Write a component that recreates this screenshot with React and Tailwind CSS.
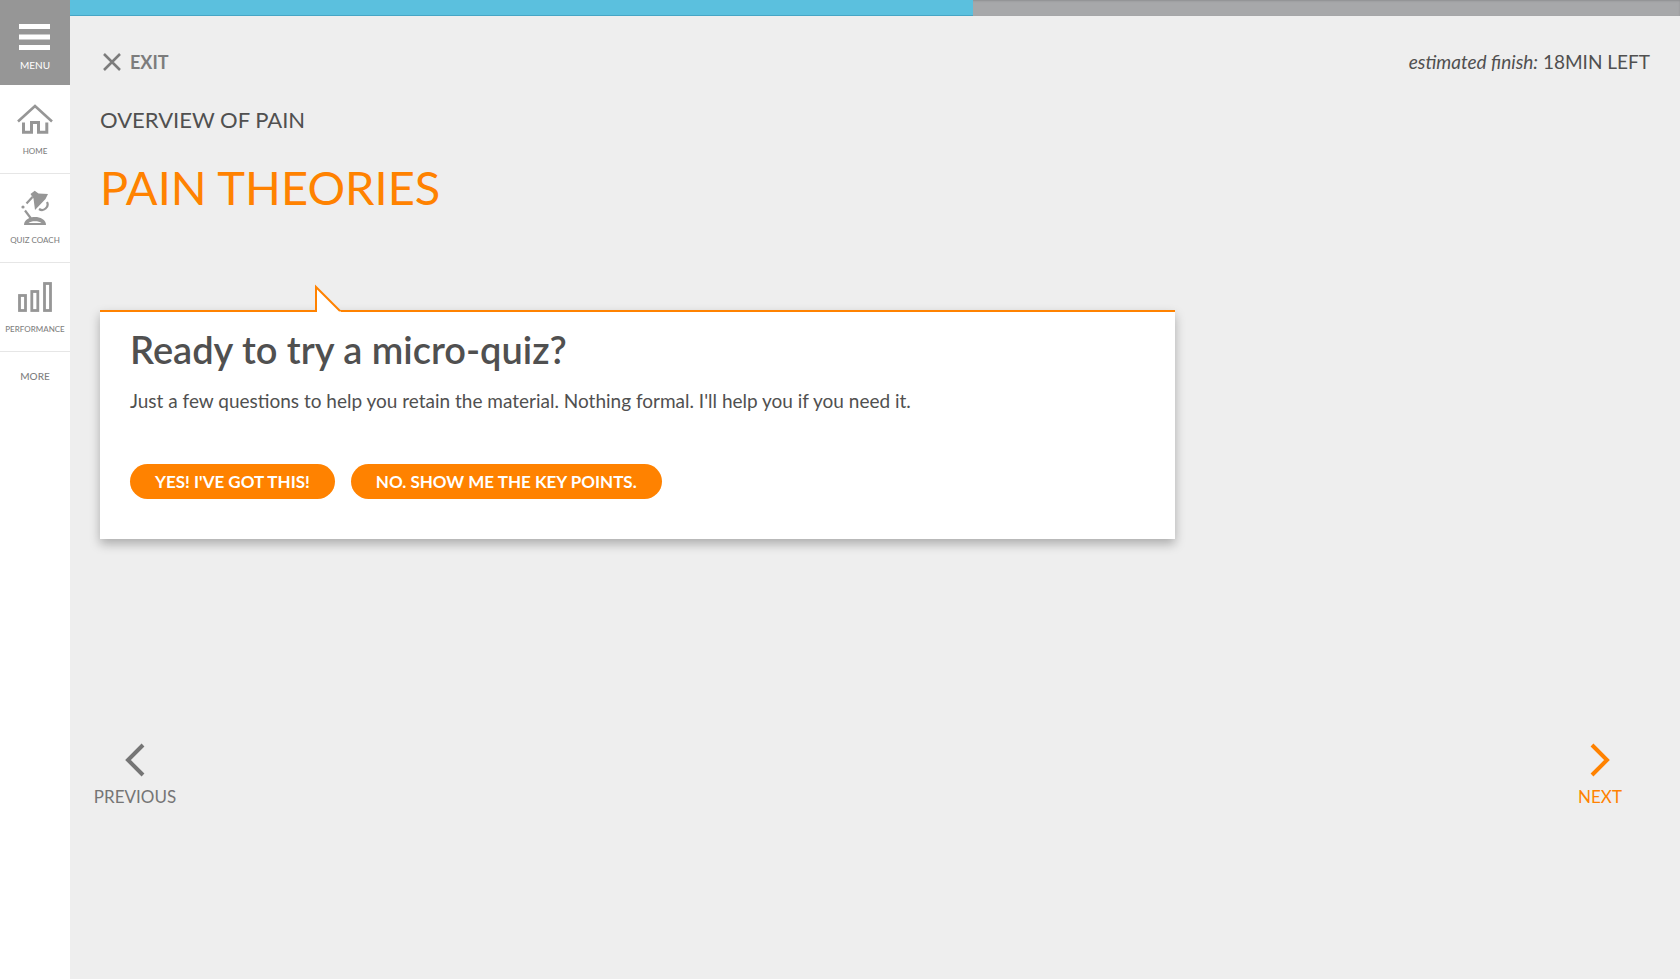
import React from "react";

function HomeIcon() {
  return (
    <svg width="36" height="30" viewBox="0 0 36 30" fill="none" stroke="#969696">
      <path d="M1 17.5 L18 2 L35 17.5" strokeWidth="2.6" />
      <path d="M6.5 18.5 V28.2 H14.5 V18.5 H21.5 V28.2 H29.8 V18.5" strokeWidth="3" />
    </svg>
  );
}

function LampIcon() {
  return (
    <svg width="30" height="36" viewBox="0 0 30 36" fill="none" stroke="#969696" strokeWidth="2.2">
      <path d="M10.5 4 L14.7 0.8 L18.5 3.4 L28 4 L25.5 9 L15 20 L13.5 8.5 Z" fill="#969696" stroke="none" />
      <path d="M12.5 7 L6.5 13.5" />
      <circle cx="3" cy="17" r="1.6" fill="#969696" stroke="none" />
      <path d="M5 20.5 L11 28.5" />
      <path d="M27 12 C29.500 17 23.500 22 19 19" />
      <path d="M4 35 C4 29.5 10 27 15 27 C20 27 26 29.5 26 35 Z" fill="#969696" stroke="none" />
      <path d="M8.500 33 C11 30.5 19 30.5 21.500 33 Z" fill="#fff" stroke="none" />
    </svg>
  );
}

function BarsIcon() {
  return (
    <svg width="36" height="32" viewBox="0 0 36 32" fill="none" stroke="#969696" strokeWidth="2.8">
      <rect x="2.5" y="14.5" width="6" height="15" />
      <rect x="14.8" y="10.5" width="6" height="19" />
      <rect x="27.5" y="2.5" width="6" height="27" />
    </svg>
  );
}

function NavItem({ icon, label }) {
  return (
    <li className="border-b border-[#e6e6e6]">
      <a href="#" className="flex h-[88px] flex-col items-center justify-between pt-3.5 pb-4">
        <span className="flex h-10 items-center">{icon}</span>
        <span className="text-[8px] leading-3 font-medium whitespace-nowrap">{label}</span>
      </a>
    </li>
  );
}

export default function App() {
  return (
    <div className="flex min-h-screen bg-[#eeeeee] font-[Lato,sans-serif] text-[#505050]">
      <nav className="w-[70px] shrink-0 bg-white text-[#7f7f7f]">
        <button type="button" className="flex h-[85px] w-full flex-col items-center gap-[7px] bg-[#969696] pt-6 text-white">
          <svg width="32" height="26" viewBox="0 0 32 26" fill="#fff">
            <path d="M0 0h31v5H0zM0 10.5h31v5H0zM0 21h31v5H0z" />
          </svg>
          <span className="text-[10px] leading-4">MENU</span>
        </button>
        <ul>
          <NavItem icon={<HomeIcon />} label="HOME" />
          <NavItem icon={<LampIcon />} label="QUIZ COACH" />
          <NavItem icon={<BarsIcon />} label="PERFORMANCE" />
        </ul>
        <button type="button" className="w-full pt-4 text-[10px] leading-4 font-medium">MORE</button>
      </nav>

      <div className="min-w-0 flex-1">
        <div
          role="progressbar"
          aria-valuenow={56}
          aria-label="Course progress"
          className="h-4 bg-[#a7a8aa] shadow-[inset_0_1px_2px_rgba(0,0,0,0.15)]"
        >
          <div className="h-full w-[56.1%] border-b border-[#46a5c5] bg-[#5bc0de]" />
        </div>

        <main className="px-[30px]">
          <header className="flex items-center justify-between pt-8">
            <button type="button" className="flex items-center gap-1.5 text-lg leading-7 font-bold text-[#7c7c7c]">
              <svg width="24" height="20" viewBox="0 0 24 20" fill="none" stroke="#7c7c7c" strokeWidth="2.5">
                <path d="M4 2 L20 18 M20 2 L4 18" />
              </svg>
              EXIT
            </button>
            <p className="text-[19px] leading-7">
              <i>estimated finish:</i> 18MIN LEFT
            </p>
          </header>

          <h2 className="pt-7 text-[22px] leading-8">OVERVIEW OF PAIN</h2>
          <h1 className="pt-6 text-[47px] leading-[54px] text-[#ff8200]">PAIN THEORIES</h1>

          <section className="relative mt-24 max-w-[1075px] border-t-2 border-[#ff8200] bg-white px-[30px] pt-[13px] pb-10 shadow-[0_5px_10px_rgba(0,0,0,0.28)]">
            <svg className="absolute -top-[28px] left-[214px]" width="28" height="28" viewBox="0 0 28 28">
              <path d="M2 3 V28 H27 Z" fill="#fff" />
              <path d="M2 28 V3 L26 27" fill="none" stroke="#ff8200" strokeWidth="2" />
            </svg>
            <h3 className="text-[38px] leading-[48px] font-semibold">Ready to try a micro-quiz?</h3>
            <p className="pt-3 text-[19px] leading-8">
              Just a few questions to help you retain the material. Nothing formal. I'll help you if you need it.
            </p>
            <div className="flex flex-wrap gap-4 pt-[47px]">
              <button type="button" className="h-[35px] rounded-full bg-[#ff8200] px-[25px] text-[17px] font-bold text-white">
                YES! I'VE GOT THIS!
              </button>
              <button type="button" className="h-[35px] rounded-full bg-[#ff8200] px-[25px] text-[17px] font-bold text-white">
                NO. SHOW ME THE KEY POINTS.
              </button>
            </div>
          </section>

          <div className="flex justify-between pt-[204px] pb-10">
            <button type="button" className="-ml-2 flex w-[86px] flex-col items-center gap-2 text-[17px] leading-6 text-[#757575]">
              <svg width="22" height="34" viewBox="0 0 22 34" fill="none" stroke="#757575" strokeWidth="4">
                <path d="M19 2 L4 17 L19 32" />
              </svg>
              PREVIOUS
            </button>
            <button type="button" className="mr-[7px] flex w-[86px] flex-col items-center gap-2 text-[17px] leading-6 text-[#ff8200]">
              <svg width="22" height="34" viewBox="0 0 22 34" fill="none" stroke="#ff8200" strokeWidth="4">
                <path d="M3 2 L18 17 L3 32" />
              </svg>
              NEXT
            </button>
          </div>
        </main>
      </div>
    </div>
  );
}
